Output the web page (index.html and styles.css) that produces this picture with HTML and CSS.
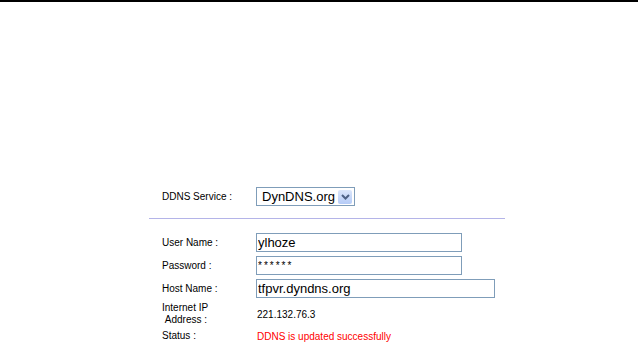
FILE: index.html
```html
<!DOCTYPE html>
<html lang="en">
<head>
    <meta charset="UTF-8">
    <title>DDNS</title>
    <link rel="stylesheet" href="styles.css">
</head>
<body>
    <div class="topline"></div>

    <!-- DDNS settings -->
    <div class="panel">
        <div class="row service-row">
            <span class="label">DDNS Service :</span>
            <div class="select">
                <span class="select-text">DynDNS.org</span>
                <span class="select-btn">
                    <svg width="9" height="6" viewBox="0 0 9 6"><path d="M1 1 L4.5 4.5 L8 1" fill="none" stroke="#4d6185" stroke-width="2"/></svg>
                </span>
            </div>
        </div>

        <div class="divider"></div>

        <div class="fields">
            <div class="row">
                <span class="label">User Name :</span>
                <input class="field" type="text" value="ylhoze">
            </div>
            <div class="row">
                <span class="label">Password :</span>
                <input class="field masked" type="text" value="******">
            </div>
            <div class="row">
                <span class="label">Host Name :</span>
                <input class="field wide" type="text" value="tfpvr.dyndns.org">
            </div>
            <div class="row">
                <span class="label">Internet IP<br>&nbsp;Address :</span>
                <span class="value">221.132.76.3</span>
            </div>
            <div class="row status-row">
                <span class="label">Status :</span>
                <span class="value status">DDNS is updated successfully</span>
            </div>
        </div>
    </div>
</body>
</html>
```

FILE: styles.css
```css
body {
    font-family: "Liberation Sans", Arial, sans-serif;
    background-color: #fff;
    margin: 0;
    padding: 0;
    color: #000;
}

.topline {
    border-top: 2px solid #000;
}

.panel {
    margin: 185px 0 0 149px;
    width: 356px;
}

.row {
    display: flex;
    align-items: center;
    padding-left: 13px;
}

.label {
    width: 94px;
    font-size: 10px;
    line-height: 12px;
}

.select {
    display: flex;
    align-items: center;
    justify-content: space-between;
    width: 90px;
    height: 17px;
    border: 1px solid #7f9db9;
    padding: 0 2px 0 5px;
    box-sizing: content-box;
}

.select-text {
    font-size: 13px;
}

.select-btn {
    display: flex;
    align-items: center;
    justify-content: center;
    width: 14px;
    height: 14px;
    border-radius: 2px;
    background: linear-gradient(#dbe6fb, #b5cbf7);
}

.divider {
    border-top: 1px solid #b4b4e8;
    margin: 12px 0 14px;
}

.fields .row {
    margin-bottom: 4px;
}

.fields .status-row {
    margin-top: 1px;
}

.field {
    font-family: "Liberation Sans", Arial, sans-serif;
    font-size: 13px;
    height: 19px;
    width: 206px;
    border: 1px solid #7f9db9;
    padding: 0 1px;
    margin: 0;
    box-sizing: border-box;
    color: #000;
}

.field.wide {
    width: 239px;
}

.field.masked {
    font-size: 10px;
    letter-spacing: 2px;
}

.value {
    font-size: 10px;
    margin-left: 1px;
}

.status {
    color: #ff0000;
}
```
